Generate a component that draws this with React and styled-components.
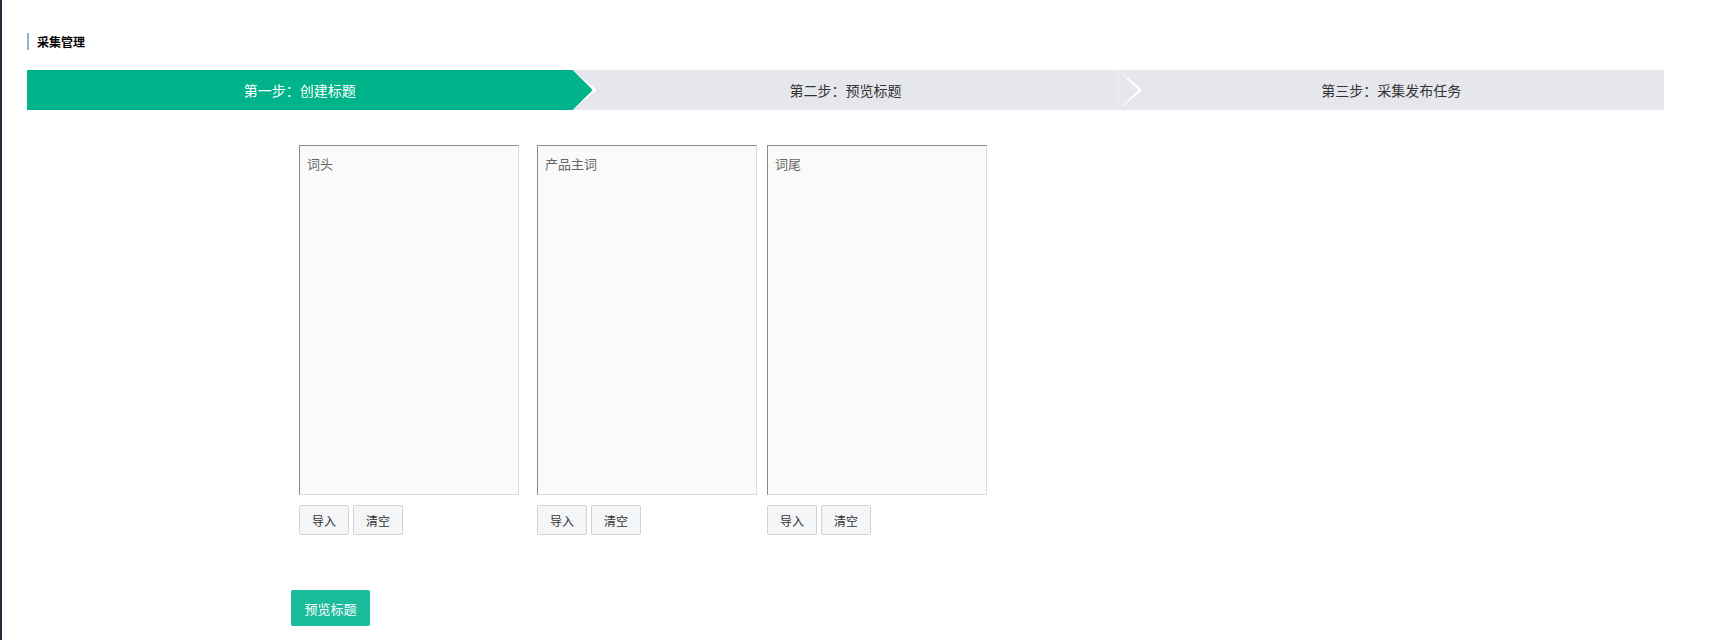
import React from 'react';
import styled, { createGlobalStyle } from 'styled-components';

const GlobalStyle = createGlobalStyle`
  html, body {
    margin: 0;
    padding: 0;
    background: #ffffff;
  }
  body {
    font-family: "Noto Sans CJK SC", "Noto Sans", sans-serif;
    color: #333;
  }
  * {
    box-sizing: border-box;
  }
`;

const Page = styled.div`
  min-height: 640px;
  border-left: 2px solid #1f2d3d;
  padding: 33px 50px 0 25px;
`;

const Heading = styled.h3`
  margin: 0;
  height: 17px;
  line-height: 17px;
  padding-left: 8px;
  border-left: 2px solid #8ab4e0;
  font-size: 12px;
  font-weight: bold;
  color: #000;
`;

const Steps = styled.div`
  display: flex;
  margin-top: 20px;
  height: 40px;
`;

const Step = styled.div`
  position: relative;
  flex: 1;
  z-index: ${(p) => p.$z};
  background: ${(p) => (p.$active ? '#00b38a' : '#e6e7ec')};
  color: ${(p) => (p.$active ? '#ffffff' : '#333333')};
  font-size: 14px;
  line-height: 40px;
  text-align: center;

  &::before,
  &::after {
    content: '';
    display: ${(p) => (p.$last ? 'none' : 'block')};
    position: absolute;
    top: 0;
    height: 40px;
    clip-path: polygon(0 0, 100% 50%, 0 100%);
  }

  &::before {
    right: -24px;
    width: 24px;
    background: #ffffff;
  }

  &::after {
    right: -20px;
    width: 20px;
    background: ${(p) => (p.$active ? '#00b38a' : '#e6e7ec')};
  }
`;

const Form = styled.div`
  padding-left: 264px;
`;

const Columns = styled.div`
  display: flex;
  margin-top: 35px;
  margin-left: 8px;
`;

const Column = styled.div`
  display: flex;
  flex-direction: column;
  margin-right: ${(p) => p.$gap}px;
`;

const WordBox = styled.textarea`
  width: 220px;
  height: 350px;
  resize: none;
  padding: 8px 7px;
  background: #fafafa;
  border: 1px solid;
  border-color: #8a8a8a #dcdcdc #dcdcdc #8a8a8a;
  font-family: inherit;
  font-size: 13px;
  color: #333;
  outline: none;

  &::placeholder {
    color: #666;
  }
`;

const Buttons = styled.div`
  display: flex;
  gap: 4px;
  margin-top: 10px;
`;

const SmallButton = styled.button`
  width: 50px;
  height: 30px;
  padding: 0;
  background: #f4f5f7;
  border: 1px solid #cfd3d8;
  border-radius: 2px;
  font-family: inherit;
  font-size: 12px;
  color: #333;
  cursor: pointer;
`;

const PreviewButton = styled.button`
  margin-top: 55px;
  width: 79px;
  height: 36px;
  padding: 0;
  background: #1abc9c;
  border: none;
  border-radius: 2px;
  font-family: inherit;
  font-size: 13px;
  color: #ffffff;
  cursor: pointer;
`;

const steps = ['第一步：创建标题', '第二步：预览标题', '第三步：采集发布任务'];

const columns = [
  { placeholder: '词头', gap: 18 },
  { placeholder: '产品主词', gap: 10 },
  { placeholder: '词尾', gap: 0 },
];

export default function App() {
  return (
    <>
      <GlobalStyle />
      <Page>
        <Heading>采集管理</Heading>
        <Steps>
          {steps.map((s, i) => (
            <Step key={i} $active={i === 0} $last={i === steps.length - 1} $z={steps.length - i}>
              {s}
            </Step>
          ))}
        </Steps>
        <Form>
          <Columns>
            {columns.map((c, i) => (
              <Column key={i} $gap={c.gap}>
                <WordBox placeholder={c.placeholder} />
                <Buttons>
                  <SmallButton>导入</SmallButton>
                  <SmallButton>清空</SmallButton>
                </Buttons>
              </Column>
            ))}
          </Columns>
          <PreviewButton>预览标题</PreviewButton>
        </Form>
      </Page>
    </>
  );
}
